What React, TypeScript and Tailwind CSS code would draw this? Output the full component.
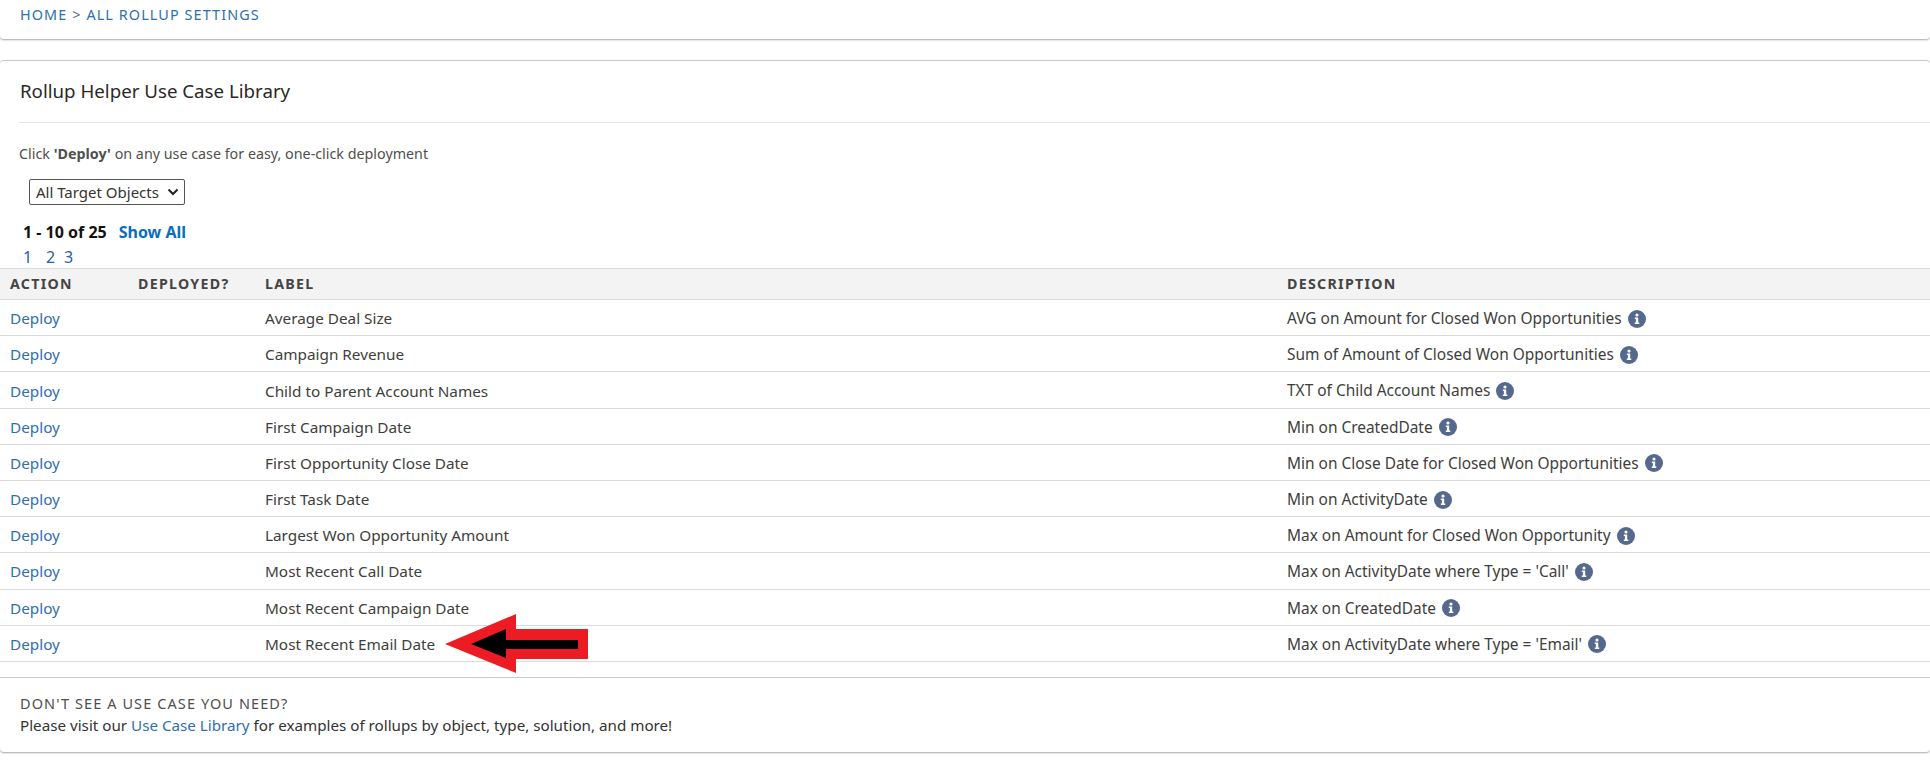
import React from "react";

const rows: [string, string][] = [
  ["Average Deal Size", "AVG on Amount for Closed Won Opportunities"],
  ["Campaign Revenue", "Sum of Amount of Closed Won Opportunities"],
  ["Child to Parent Account Names", "TXT of Child Account Names"],
  ["First Campaign Date", "Min on CreatedDate"],
  ["First Opportunity Close Date", "Min on Close Date for Closed Won Opportunities"],
  ["First Task Date", "Min on ActivityDate"],
  ["Largest Won Opportunity Amount", "Max on Amount for Closed Won Opportunity"],
  ["Most Recent Call Date", "Max on ActivityDate where Type = 'Call'"],
  ["Most Recent Campaign Date", "Max on CreatedDate"],
  ["Most Recent Email Date", "Max on ActivityDate where Type = 'Email'"],
];

function InfoIcon() {
  return (
    <svg width="18" height="18" viewBox="0 0 18 18" className="ml-[6px] shrink-0">
      <circle cx="9" cy="9" r="9" fill="#54698d" />
      <circle cx="9" cy="5" r="1.6" fill="#fff" />
      <path d="M6.8 7.6h3.4v5h1.1v1.5H6.8v-1.5h1.1V9.1H6.8z" fill="#fff" />
    </svg>
  );
}

export default function App() {
  return (
    <div className="relative w-[1930px] h-[772px] overflow-hidden bg-white font-['Noto_Sans',sans-serif] text-[15.3px] text-[#3e3e3c]">
      <div className="h-[39px] rounded-b-[4px] bg-white pl-[20px] pt-[3px] shadow-[0_1px_2px_rgba(0,0,0,0.35)]">
        <span className="text-[14.4px] leading-[22px] tracking-[1.1px] text-[#2f6fad]">
          HOME <span className="text-[#54698d]">&gt;</span> ALL ROLLUP SETTINGS
        </span>
      </div>

      <div className="mt-[21px] h-[692px] rounded-[4px] border-t border-t-[#c9c9c9] bg-white shadow-[0_1px_2px_rgba(0,0,0,0.35)]">
        <div className="ml-[19px] h-[62px] border-b border-b-[#e5e5e5] pl-px pt-[17px] text-[18.7px] leading-[26px] text-[#2b2826]">
          Rollup Helper Use Case Library
        </div>
        <div className="mt-[21px] pl-[19px] text-[14.3px] leading-[20px] text-[#514f4d]">
          Click <b className="font-bold">'Deploy'</b> on any use case for easy, one-click deployment
        </div>
        <div className="ml-[29px] mt-[15px] flex h-[26px] w-[156px] items-center justify-between rounded-[2px] border border-[#555] pl-[6px] pr-[5px] text-[15px] text-[#333]">
          <span>All Target Objects</span>
          <svg width="12" height="8" viewBox="0 0 12 8">
            <path d="M1.5 1.5 6 6l4.5-4.5" fill="none" stroke="#222" strokeWidth="2" />
          </svg>
        </div>
        <div className="ml-[23px] mt-[17px] flex h-[20px] items-center text-[16px] font-bold">
          <span className="text-[#111]">1 - 10 of 25</span>
          <span className="ml-[12px] text-[#0a6ebd]">Show All</span>
        </div>
        <div className="ml-[23px] mt-[5px] flex h-[20px] items-center text-[16px] text-[#2a5db0]">
          <span className="w-[23px]">1</span>
          <span className="w-[18px]">2</span>
          <span>3</span>
        </div>

        <div className="mt-[1px] grid h-[32px] grid-cols-[128px_127px_1022px_1fr] items-center border-y border-y-[#dddbda] bg-[#f3f3f3] pl-[10px] text-[14.2px] font-bold tracking-[1.3px] text-[#444]">
          <div>ACTION</div>
          <div>DEPLOYED?</div>
          <div>LABEL</div>
          <div>DESCRIPTION</div>
        </div>
        {rows.map(([label, desc]) => (
          <div
            key={label}
            className="grid h-[36.2px] grid-cols-[128px_127px_1022px_1fr] items-center border-b border-b-[#dddbda] pl-[10px] pt-[2px]"
          >
            <div className="text-[#2f6fad]">Deploy</div>
            <div />
            <div>{label}</div>
            <div className="flex items-center text-[15.45px]">
              <span>{desc}</span>
              <InfoIcon />
            </div>
          </div>
        ))}

        <div className="mt-[15px] border-t border-t-[#c9c9c9] pl-[20px] pt-[14px]">
          <div className="text-[14.5px] leading-[22px] tracking-[1.1px] text-[#514f4d]">DON'T SEE A USE CASE YOU NEED?</div>
          <div className="text-[15.2px] leading-[22px] text-[#333]">
            Please visit our <span className="text-[#2f6fad]">Use Case Library</span> for examples of rollups by object, type, solution, and more!
          </div>
        </div>
      </div>

      <svg className="absolute left-[440px] top-[610px]" width="152" height="68" viewBox="440 610 152 68">
        <polygon points="445,644 516,614 516,629 588,629 588,659 516,659 516,673" fill="#ed1c24" />
        <polygon points="471,644 506,629 506,640 578,640 578,649 506,649 506,658" fill="#000" />
      </svg>
    </div>
  );
}
